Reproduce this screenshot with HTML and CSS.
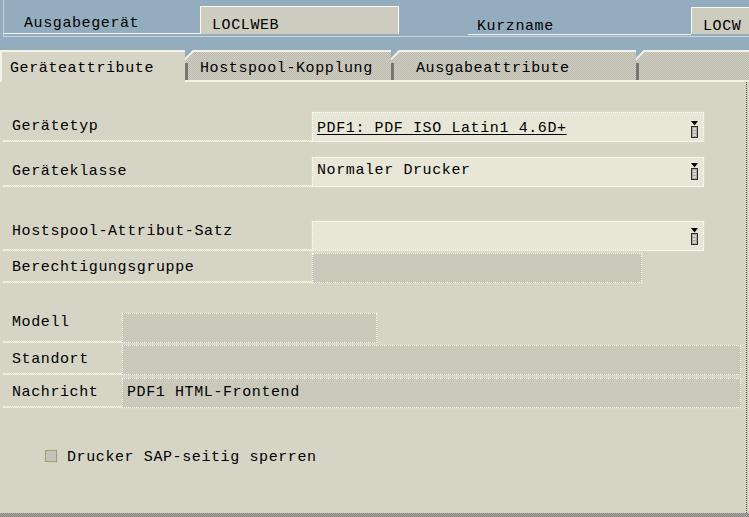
FILE: index.html
```html
<!DOCTYPE html>
<html lang="de">
<head>
<meta charset="utf-8">
<title>Ausgabegerät</title>
<link rel="stylesheet" href="styles.css">
</head>
<body>
<div class="screen">
  <div class="header">
    <div class="hframe">
      <div class="hlabel hl1">Ausgabegerät</div>
      <div class="hfield hf1">LOCLWEB</div>
      <div class="hlabel hl2">Kurzname</div>
      <div class="hfield hf2">LOCW</div>
    </div>
  </div>
  <div class="tabs">
    <div class="tab active">Geräteattribute</div>
    <div class="tab inactive t2">Hostspool-Kopplung</div>
    <div class="tab inactive t3">Ausgabeattribute</div>
    <div class="tab inactive t4"></div>
  </div>
  <div class="content">
    <div class="row r1">
      <div class="label wl">Gerätetyp</div>
      <div class="field light wf push-down"><span class="u">PDF1: PDF ISO Latin1 4.6D+</span><svg class="dd" width="9" height="17" viewBox="0 0 9 17"><path d="M1 0h7L4.5 4.5z" fill="#000"/><rect x="1.5" y="5.5" width="6" height="11" fill="#a9a8a0" stroke="#2e2e2e"/><path d="M3 8h3M3 11h3M3 14h3" stroke="#fff"/></svg></div>
    </div>
    <div class="row r2">
      <div class="label wl">Geräteklasse</div>
      <div class="field light wf push-up"><span>Normaler Drucker</span><svg class="dd" width="9" height="17" viewBox="0 0 9 17"><path d="M1 0h7L4.5 4.5z" fill="#000"/><rect x="1.5" y="5.5" width="6" height="11" fill="#a9a8a0" stroke="#2e2e2e"/><path d="M3 8h3M3 11h3M3 14h3" stroke="#fff"/></svg></div>
    </div>
    <div class="row r3">
      <div class="label wl top">Hostspool-Attribut-Satz</div>
      <div class="field light wf"><span></span><svg class="dd" width="9" height="17" viewBox="0 0 9 17"><path d="M1 0h7L4.5 4.5z" fill="#000"/><rect x="1.5" y="5.5" width="6" height="11" fill="#a9a8a0" stroke="#2e2e2e"/><path d="M3 8h3M3 11h3M3 14h3" stroke="#fff"/></svg></div>
    </div>
    <div class="row r4">
      <div class="label wl">Berechtigungsgruppe</div>
      <div class="field grey wf4"></div>
    </div>
    <div class="row r5">
      <div class="label ws top0">Modell</div>
      <div class="field grey wf5"></div>
    </div>
    <div class="row r6">
      <div class="label ws">Standort</div>
      <div class="field grey wf6"></div>
    </div>
    <div class="row r7">
      <div class="label ws">Nachricht</div>
      <div class="field grey wf6"><span>PDF1 HTML-Frontend</span></div>
    </div>
    <div class="check">
      <span class="box"></span>
      <span class="ctext">Drucker SAP-seitig sperren</span>
    </div>
  </div>
  <div class="status"></div>
</div>
</body>
</html>
```
FILE: styles.css
```css
* { box-sizing: border-box; margin: 0; padding: 0; }
html, body { width: 749px; height: 517px; overflow: hidden; }
body {
  font-family: "Liberation Mono", "DejaVu Sans Mono", monospace;
  font-size: 15px;
  letter-spacing: 0.6px;
  line-height: 18px;
  color: #000;
  background: #d6d4c5;
}
.screen { width: 749px; height: 517px; display: flex; flex-direction: column; }

/* header */
.header { flex: none; height: 50px; background: #93adbf; }
.hframe {
  margin-left: 3px; height: 37px;
  border-left: 1px solid #c6d4dd; border-bottom: 1px solid #c6d4dd;
  display: flex; align-items: flex-start;
}
.hlabel { border-bottom: 1px solid #f4f6f2; white-space: nowrap; }
.hl1 { width: 196px; height: 34px; padding: 15px 0 0 20px; }
.hl2 { width: 223px; height: 35px; margin-left: 69px; padding: 18px 0 0 9px; }
.hfield {
  background: #cdccbe;
  border-top: 1px solid #fbfbf4; border-left: 1px solid #fbfbf4;
  padding: 10px 0 0 11px; white-space: nowrap;
}
.hf1 { width: 199px; height: 28px; margin-top: 6px; border-right: 1px solid #fbfbf4; }
.hf2 { flex: 1; height: 27px; margin-top: 7px; }

/* tabs */
.tabs { flex: none; height: 32px; display: flex; background: #93adbf; }
.tab { height: 32px; padding-top: 10px; white-space: nowrap; }
.tab.active {
  width: 185px; padding-left: 10px; background: #d6d4c5;
  box-shadow: inset 2px 2px 0 #f3f2e4;
}
.tab.inactive {
  clip-path: polygon(0 8px, 8px 0, 100% 0, 100% 100%, 0 100%);
  border-bottom: 2px solid #f3f2e8;
  background:
    linear-gradient(135deg, transparent 5.4px, #f3f2e8 5.4px, #f3f2e8 7.2px, transparent 7.2px) no-repeat 0 0 / 10px 10px,
    linear-gradient(#f3f2e8, #f3f2e8) no-repeat 0 0 / 100% 2px,
    linear-gradient(#77766e, #77766e) no-repeat 0 13px / 3px 17px,
    repeating-conic-gradient(#bbbaad 0 25%, #cfcec2 0 50%) 0 0 / 2px 2px;
}
.t2 { width: 206px; padding-left: 15px; }
.t3 { width: 245px; padding-left: 25px; }
.t4 { flex: 1; }

/* content */
.content {
  flex: 1; width: 747px;
  border-right: 1px dotted #4f4f49;
  padding: 30px 0 0 3px;
  display: flex; flex-direction: column;
}
.row { display: flex; height: 30px; flex: none; }
.r2 { margin-top: 15px; }
.r3 { margin-top: 34px; }
.r4 { margin-top: 2px; }
.r5 { margin-top: 30px; }
.r6 { margin-top: 2px; }
.r7 { margin-top: 3px; }

.label {
  display: flex; align-items: center; padding-left: 9px; white-space: nowrap;
  background: repeating-conic-gradient(#fbfaf3 0 25%, #e3e0bb 0 50%) left bottom / 2px 2px repeat-x;
}
.label.top { align-items: flex-start; padding-top: 2px; }
.label.top0 { align-items: flex-start; padding-top: 1px; }
.wl { width: 309px; }
.ws { width: 119px; }

.field {
  display: flex; align-items: center; justify-content: space-between;
  padding: 0 4px 0 4px; white-space: nowrap;
  border: 1px dotted #ffffff;
  outline: 1px dotted #e2dbbf;
}
.field.light { background: #e8e6d6; }
.field.grey { background: #c9c8ba; }
.push-down { padding-top: 4px; }
.push-up { padding-bottom: 2px; }
.wf { width: 392px; }
.wf4 { width: 330px; }
.wf5 { width: 255px; }
.wf6 { width: 619px; }
.u { text-decoration: underline; text-underline-offset: 2px; }
.dd { flex: none; display: block; }

.check { display: flex; align-items: flex-start; margin-top: 41px; padding-left: 41px; }
.box {
  width: 14px; height: 14px; background: #c4c3b5;
  border: 1px dotted #e9e49a; box-shadow: inset 0 0 0 1px #9d9c91;
}
.ctext { margin-left: 9px; line-height: 18px; margin-top: 0; }

.status {
  flex: none; height: 4px;
  background: repeating-conic-gradient(#7a7a72 0 25%, #b3b2a7 0 50%) 0 0 / 2px 2px;
}
```
